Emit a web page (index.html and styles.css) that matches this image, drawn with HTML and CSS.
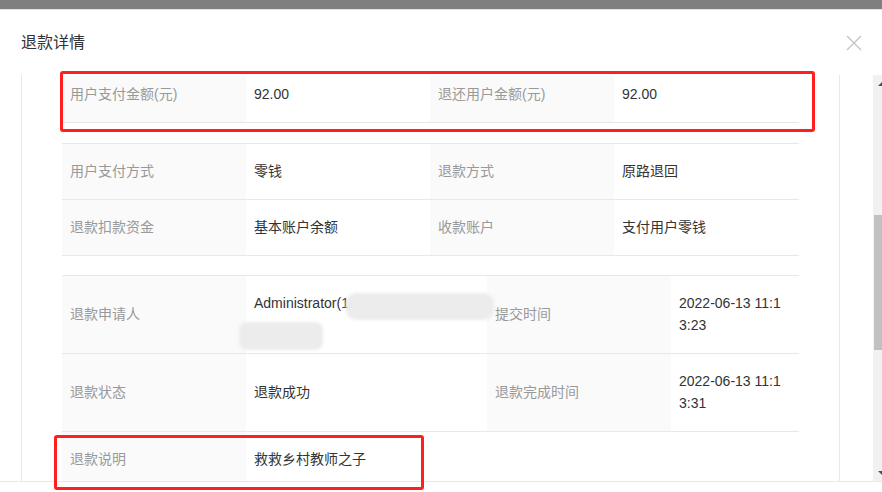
FILE: index.html
```html
<!DOCTYPE html>
<html lang="zh-CN">
<head>
    <meta charset="UTF-8">
    <meta name="viewport" content="width=device-width, initial-scale=1.0">
    <title>退款详情</title>
    <link rel="stylesheet" href="styles.css">
</head>
<body>

    <div class="mask-top"></div>

    <div class="dialog">
        <div class="dialog-header">
            <span class="dialog-title">退款详情</span>
            <span class="dialog-close">
                <svg width="16" height="16" viewBox="0 0 16 16">
                    <path d="M1 1 L15 15 M15 1 L1 15" stroke="#c4c4c4" stroke-width="1.4" fill="none"/>
                </svg>
            </span>
        </div>

        <div class="dialog-main">
            <div class="dialog-body" id="dialogBody">
                <div class="detail-card">

                    <table class="detail-table">
                        <colgroup><col class="w184"><col class="w184"><col class="w184"><col></colgroup>
                        <tr>
                            <td class="label">用户支付金额(元)</td>
                            <td class="value">92.00</td>
                            <td class="label">退还用户金额(元)</td>
                            <td class="value">92.00</td>
                        </tr>
                    </table>

                    <table class="detail-table">
                        <colgroup><col class="w184"><col class="w184"><col class="w184"><col></colgroup>
                        <tr>
                            <td class="label">用户支付方式</td>
                            <td class="value">零钱</td>
                            <td class="label">退款方式</td>
                            <td class="value">原路退回</td>
                        </tr>
                        <tr>
                            <td class="label">退款扣款资金</td>
                            <td class="value">基本账户余额</td>
                            <td class="label">收款账户</td>
                            <td class="value">支付用户零钱</td>
                        </tr>
                    </table>

                    <table class="detail-table">
                        <colgroup><col class="w184"><col class="w241"><col class="w184"><col></colgroup>
                        <tr>
                            <td class="label">退款申请人</td>
                            <td class="value cell-top">
                                Administrator(1
                                <span class="blur blur-a"></span>
                                <span class="blur blur-b"></span>
                            </td>
                            <td class="label">提交时间</td>
                            <td class="value time">2022-06-13 11:13:23</td>
                        </tr>
                        <tr>
                            <td class="label">退款状态</td>
                            <td class="value">退款成功</td>
                            <td class="label">退款完成时间</td>
                            <td class="value time">2022-06-13 11:13:31</td>
                        </tr>
                        <tr>
                            <td class="label">退款说明</td>
                            <td class="value" colspan="3">救救乡村教师之子</td>
                        </tr>
                    </table>

                </div>
            </div>

            <div class="scrollbar">
                <div class="scroll-btn"><span class="arrow-up"></span></div>
                <div class="scroll-thumb"></div>
                <div class="scroll-space"></div>
                <div class="scroll-btn"><span class="arrow-down"></span></div>
            </div>
        </div>

        <div class="dialog-footer"></div>
    </div>

    <!-- 标注框 -->
    <div class="mark mark-amount"></div>
    <div class="mark mark-remark"></div>

    <script>
        document.getElementById('dialogBody').scrollTop = 30;
    </script>

</body>
</html>
```

FILE: styles.css
```css
html, body {
    margin: 0;
    padding: 0;
    overflow: hidden;
    background-color: #ffffff;
}
body {
    font-family: "Liberation Sans", "Noto Sans CJK SC", Arial, sans-serif;
    font-size: 14px;
    color: #333;
    width: 882px;
    height: 492px;
}
.mask-top {
    height: 9px;
    background-color: #7f7f7f;
}
.dialog {
    width: 890px;
    border-top: 1px solid #e6e6e6;
    background-color: #fff;
}
.dialog-header {
    height: 65px;
    display: flex;
    align-items: center;
    justify-content: space-between;
    padding: 0 28px 0 21px;
    box-sizing: border-box;
}
.dialog-title {
    font-size: 16px;
    line-height: 22px;
    color: #333;
}
.dialog-close {
    display: flex;
    width: 16px;
    height: 16px;
    margin-top: 1px;
}
.dialog-main {
    display: flex;
    height: 406px;
}
.dialog-body {
    flex: 1;
    overflow: hidden;
    padding: 0 33px 0 21px;
}
.detail-card {
    border: 1px solid #e8e8e8;
    padding: 20px 40px 40px;
}
.detail-table {
    width: 100%;
    table-layout: fixed;
    border-collapse: collapse;
    border-top: 1px solid #e8e8e8;
    margin-bottom: 20px;
}
.detail-table:nth-child(2) {
    margin-bottom: 19px;
}
.detail-table:last-child {
    margin-bottom: 0;
}
.w184 {
    width: 184px;
}
.w241 {
    width: 241px;
}
.detail-table td {
    padding: 16px 8px 17px;
    line-height: 22px;
    border-bottom: 1px solid #e8e8e8;
    vertical-align: middle;
}
.label {
    background-color: #fafafa;
    color: #999;
}
.value {
    color: #333;
}
.cell-top {
    vertical-align: top !important;
    position: relative;
}
.time {
    word-break: break-all;
    padding-right: 14px !important;
}
.blur {
    position: absolute;
    background-color: #ececec;
    border-radius: 10px;
    filter: blur(1.5px);
    z-index: 2;
}
.blur-a {
    left: 100px;
    top: 17px;
    width: 148px;
    height: 27px;
}
.blur-b {
    left: -7px;
    top: 46px;
    width: 84px;
    height: 28px;
    border-radius: 8px;
}
.scrollbar {
    width: 17px;
    background-color: #f1f1f1;
    display: flex;
    flex-direction: column;
}
.scroll-btn {
    height: 17px;
    display: flex;
    align-items: center;
    justify-content: center;
}
.arrow-up {
    width: 0;
    height: 0;
    border-left: 4px solid transparent;
    border-right: 4px solid transparent;
    border-bottom: 4px solid #505050;
}
.arrow-down {
    width: 0;
    height: 0;
    border-left: 4px solid transparent;
    border-right: 4px solid transparent;
    border-top: 4px solid #505050;
}
.scroll-thumb {
    margin: 123px 1px 0;
    height: 135px;
    background-color: #c1c1c1;
}
.scroll-space {
    flex: 1;
}
.dialog-footer {
    border-top: 1px solid #e8e8e8;
    height: 20px;
}
.mark {
    position: absolute;
    border: 3px solid #ff1f1f;
    border-radius: 3px;
    box-sizing: border-box;
}
.mark-amount {
    left: 60px;
    top: 71px;
    width: 755px;
    height: 61px;
}
.mark-remark {
    left: 54px;
    top: 435px;
    width: 370px;
    height: 55px;
}
```
